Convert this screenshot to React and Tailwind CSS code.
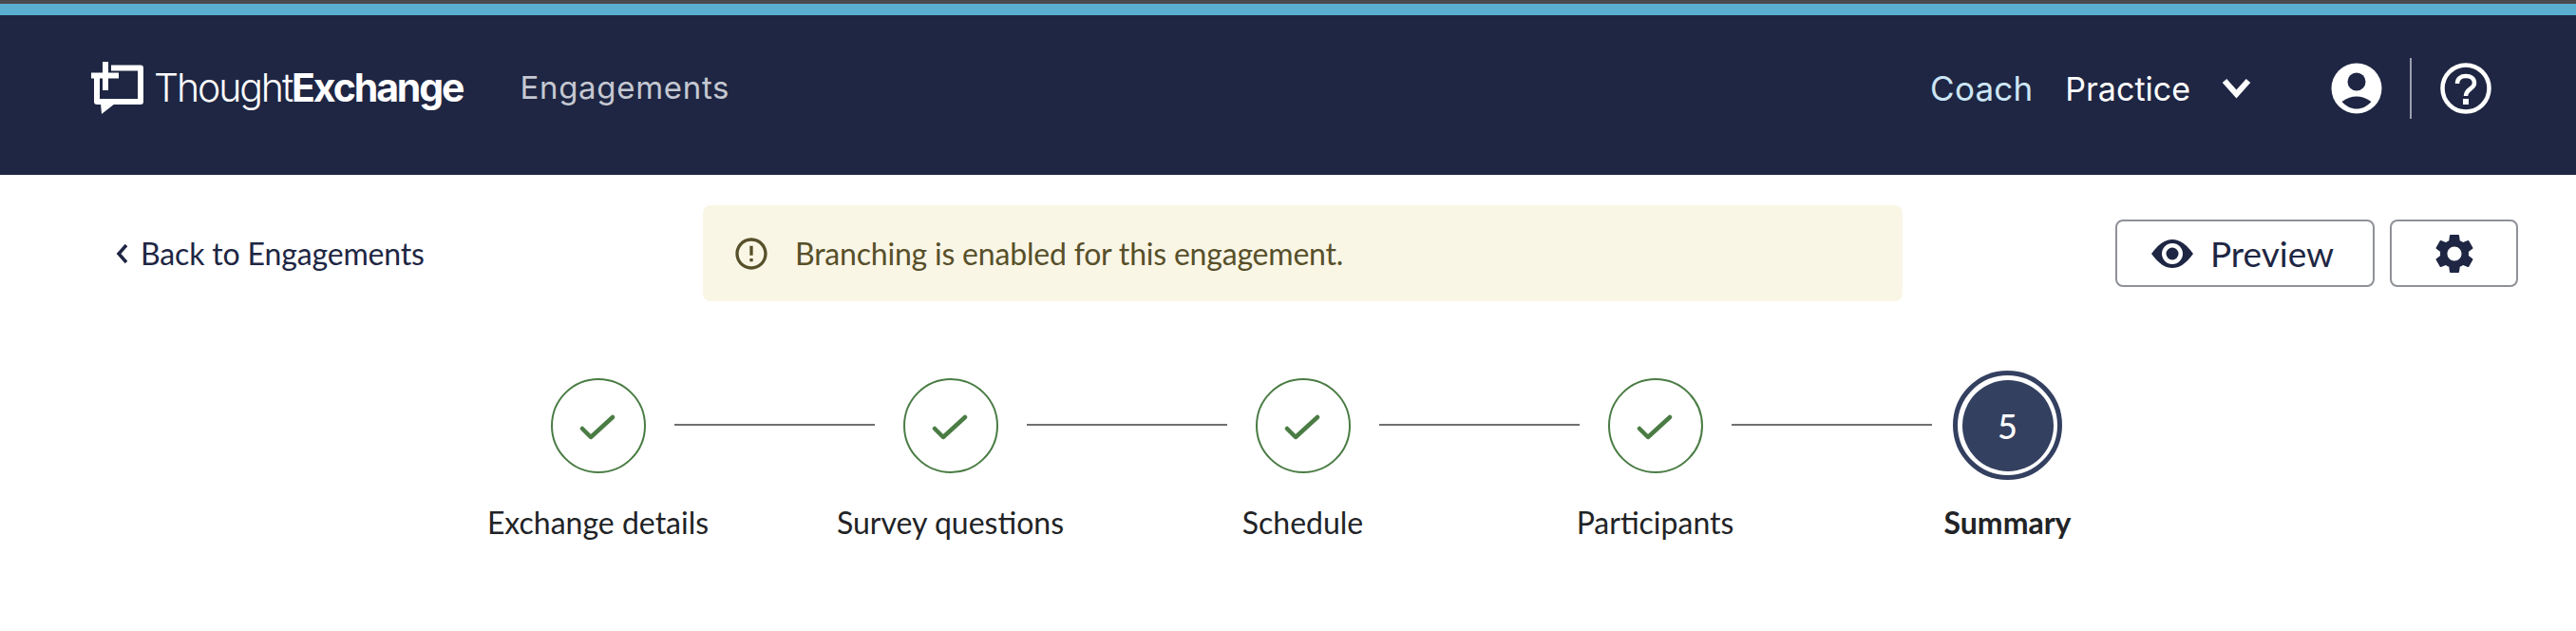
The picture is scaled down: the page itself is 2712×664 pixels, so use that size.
import React from "react";
import { MdSettings, MdErrorOutline } from "react-icons/md";

function Logo() {
  return (
    <svg width="56" height="56" viewBox="0 0 56 56" className="shrink-0" fill="none">
      <path d="M21 6.5H52V42H6V17" stroke="#fff" strokeWidth="6" strokeLinejoin="round" />
      <path d="M0 11.5H29V17.5H0ZM12 0H18V30H12Z" fill="#fff" />
      <path d="M10 44L11 55L25 44Z" fill="#fff" />
    </svg>
  );
}

function UserIcon() {
  return (
    <svg width="54" height="54" viewBox="0 0 54 54" className="ml-[84px] shrink-0">
      <circle cx="27" cy="27" r="26.5" fill="#fff" />
      <circle cx="27" cy="20" r="9.5" fill="#1e2643" />
      <path d="M11.5 41C17 37 22 35.5 27 35.5S37 37 42.5 41C38 46 32.5 48.5 27 48.5S16 46 11.5 41Z" fill="#1e2643" />
    </svg>
  );
}

function HelpIcon() {
  return (
    <svg width="54" height="54" viewBox="0 0 54 54" fill="none" className="ml-[30px] shrink-0">
      <circle cx="27" cy="27" r="24.5" stroke="#fff" strokeWidth="4.5" />
      <path d="M18 22C18 16.5 22 14 27 14C32 14 36 16.5 36 21.5C36 27.5 27 27.5 27 35" stroke="#fff" strokeWidth="4.5" />
      <path d="M24 38H30V44H24Z" fill="#fff" />
    </svg>
  );
}

function EyeIcon() {
  return (
    <svg width="44" height="30" viewBox="0 0 44 30" className="shrink-0">
      <path d="M0 15C8 4 15 0 22 0S36 4 44 15C36 26 29 30 22 30S8 26 0 15Z" fill="#1e2643" />
      <circle cx="22" cy="15" r="11" fill="#fff" />
      <circle cx="22" cy="15" r="6.5" fill="#1e2643" />
    </svg>
  );
}

function Check() {
  return (
    <svg width="38" height="28" viewBox="0 0 38 28" fill="none" className="ml-[-2px] mt-[4px]">
      <path d="M3 15L12 24L35 3" stroke="#4a7c44" strokeWidth="4.5" strokeLinecap="round" strokeLinejoin="round" />
    </svg>
  );
}

function Done() {
  return (
    <div className="flex h-[100px] w-[100px] shrink-0 items-center justify-center rounded-full border-2 border-[#4a7c44]">
      <Check />
    </div>
  );
}

function Line() {
  return <div className="mx-[30px] mb-[1px] h-[2px] w-[211px] shrink-0 bg-[#707070]" />;
}

const labels = ["Exchange details", "Survey questions", "Schedule", "Participants"];

export default function App() {
  return (
    <div className="h-[664px] w-[2712px] overflow-hidden bg-white font-['Lato',sans-serif]">
      <div className="h-[4px] bg-[#4a4a4c]" />
      <div className="h-[12px] bg-[#5aafd1]" />
      <header className="flex h-[168px] items-center bg-[#1e2643] pb-[14px] pl-[96px] pr-[89px] font-['Inter',sans-serif]">
        <Logo />
        <div className="ml-[10px] text-[41px] tracking-[-2.1px] text-white">
          <span className="font-light">Thought</span>
          <span className="font-bold">Exchange</span>
        </div>
        <div className="ml-[60px] text-[33px] tracking-[0.7px] text-[#c5c8d2]">Engagements</div>
        <div className="ml-auto text-[35px] tracking-[0.2px] text-[#cde6f5]">Coach</div>
        <div className="ml-[34px] text-[34px] text-white">Practice</div>
        <svg className="ml-[33px] shrink-0" width="31" height="22" viewBox="0 0 31 22" fill="none">
          <path d="M3 3L15.5 17L28 3" stroke="#fff" strokeWidth="6" />
        </svg>
        <UserIcon />
        <div className="ml-[29px] h-[64px] w-[2px] shrink-0 bg-[#9b9eac]" />
        <HelpIcon />
      </header>

      <div className="flex items-center pt-[32px]">
        <div className="flex w-[740px] shrink-0 items-center pl-[122px] text-[32px] tracking-[-0.15px] text-[#1e2643]">
          <svg width="13" height="22" viewBox="0 0 13 22" fill="none">
            <path d="M11 2L3 11L11 20" stroke="#1e2643" strokeWidth="3.5" />
          </svg>
          <span className="ml-[13px]">Back to Engagements</span>
        </div>
        <div className="flex h-[101px] w-[1263px] shrink-0 items-center rounded-[8px] bg-[#faf6e6] pl-[31px] text-[32px] tracking-[-0.2px] text-[#57502a]">
          <MdErrorOutline className="shrink-0 text-[40px]" />
          <span className="ml-[26px]">Branching is enabled for this engagement.</span>
        </div>
        <button className="ml-[224px] flex h-[71px] w-[273px] shrink-0 items-center rounded-[8px] border-2 border-[#8f9199] pl-[36px] text-[37px] text-[#1e2643]">
          <EyeIcon />
          <span className="ml-[18px]">Preview</span>
        </button>
        <button className="ml-[16px] flex h-[71px] w-[135px] shrink-0 items-center justify-center rounded-[8px] border-2 border-[#8f9199] text-[#1e2643]">
          <MdSettings className="text-[50px]" />
        </button>
      </div>

      <div className="ml-[444px] mt-[73px] w-[1855px]">
        <div className="flex h-[115px] items-center pl-[136px]">
          <Done /><Line />
          <Done /><Line />
          <Done /><Line />
          <Done /><Line />
          <div className="-ml-[8px] flex h-[115px] w-[115px] shrink-0 items-center justify-center rounded-full border-[5px] border-[#344060]">
            <div className="flex h-[96px] w-[96px] items-center justify-center rounded-full bg-[#344060] text-[36px] font-medium text-white">5</div>
          </div>
        </div>
        <div className="mt-[21px] grid grid-cols-5 text-center text-[32px] text-[#222326]">
          {labels.map((l) => <div key={l}>{l}</div>)}
          <div className="font-bold">Summary</div>
        </div>
      </div>
    </div>
  );
}
